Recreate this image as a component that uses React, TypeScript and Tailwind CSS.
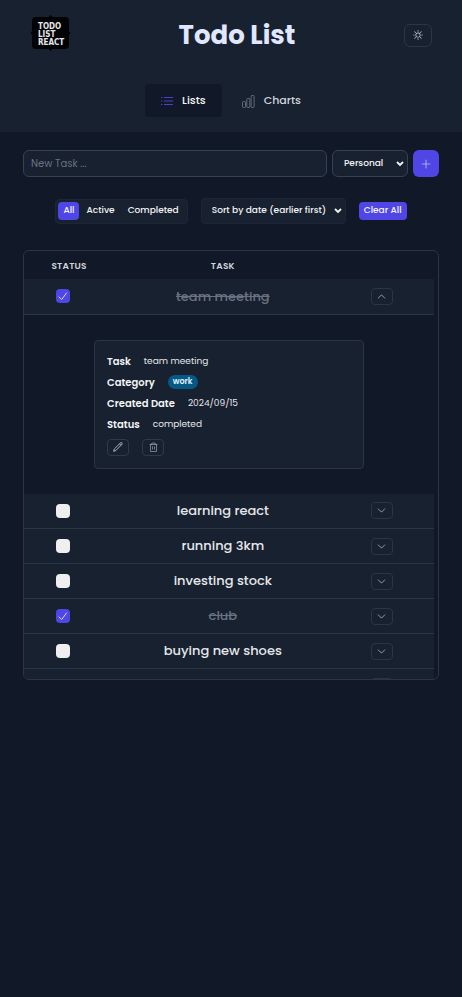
import { useState } from "react";
import { BsSun } from "react-icons/bs";
import { PiPlusLight, PiTrashLight } from "react-icons/pi";
import { ChevronDown, ChevronUp } from "lucide-react";

type Task = { name: string; done: boolean; category: string; date: string };

const initialTasks: Task[] = [
  { name: "team meeting", done: true, category: "work", date: "2024/09/15" },
  { name: "learning react", done: false, category: "study", date: "2024/09/15" },
  { name: "running 3km", done: false, category: "health", date: "2024/09/15" },
  { name: "investing stock", done: false, category: "finance", date: "2024/09/15" },
  { name: "club", done: true, category: "personal", date: "2024/09/15" },
  { name: "buying new shoes", done: false, category: "personal", date: "2024/09/15" },
  { name: "reading", done: false, category: "personal", date: "2024/09/15" },
];

function Logo() {
  return (
    <svg viewBox="0 0 40 38" className="h-[38px] w-10 overflow-visible" role="img" aria-label="Todo List React">
      <path
        d="M6 1h12.500l2-2 2 2H35q4 0 4 4v10l1.500 2-1.500 2v10q0 4-4 4H22.500l-2 2-2-2H6q-4 0-4-4V19L.5 17 2 15V5q0-4 4-4z"
        fill="#020304"
      />
      <g fill="#e5e7eb" fontFamily='"Liberation Sans Narrow", "DejaVu Sans Condensed", sans-serif' fontSize="8" fontWeight="700">
        <text x="8" y="13">TODO</text>
        <text x="8" y="21">LIST</text>
        <text x="8" y="29">REACT</text>
      </g>
    </svg>
  );
}

function ListIcon() {
  return (
    <svg viewBox="0 0 12 10" className="h-[10px] w-3 text-[#4f46e5]" fill="none" stroke="currentColor" strokeWidth="0.9" aria-hidden="true">
      <path d="M3 1.500h9M3 5h9M3 8.500h9M0 1.500h1.400M0 5h1.400M0 8.500h1.400" />
    </svg>
  );
}

function ChartIcon() {
  return (
    <svg viewBox="0 0 13 14" className="h-[14px] w-[13px] text-gray-500" fill="none" stroke="currentColor" strokeWidth="0.9" aria-hidden="true">
      <rect x="0.5" y="7.500" width="3" height="6" rx="0.8" />
      <rect x="4.800" y="4.500" width="3" height="9" rx="0.8" />
      <rect x="9.100" y="1.500" width="3" height="12" rx="0.8" />
    </svg>
  );
}

function PencilIcon() {
  return (
    <svg viewBox="0 0 10 10" className="h-[10px] w-[10px]" fill="none" stroke="currentColor" strokeWidth="0.8" strokeLinejoin="round" aria-hidden="true">
      <path d="M.7 9.300l.6-2.300L7.600.8q.8-.5 1.300 0t.1 1.400L2.900 8.500zM6.600 1.900l1.400 1.400" />
    </svg>
  );
}

function CheckIcon() {
  return (
    <svg viewBox="0 0 14 14" className="pointer-events-none absolute inset-0 h-[14px] w-[14px]" fill="none" stroke="#e0e7ff" strokeWidth="0.9" strokeLinecap="round" strokeLinejoin="round" aria-hidden="true">
      <path d="M3 8l2.700 2.500L10.500 4" />
    </svg>
  );
}

function SelectArrow() {
  return (
    <svg viewBox="0 0 8 6" className="pointer-events-none absolute right-1 top-1/2 h-[6px] w-2 -translate-y-1/2" fill="none" stroke="#f3f4f6" strokeWidth="1.800" aria-hidden="true">
      <path d="M1 1l3 3 3-3" />
    </svg>
  );
}

function Details({ task }: { task: Task }) {
  const iconButton =
    "flex h-[17px] w-[22px] items-center justify-center rounded border border-[#2f3947] text-gray-300";
  return (
    <div className="mx-auto w-[270px] rounded border border-[#2b3543] bg-[#18212f] px-3 pt-[10px] pb-3 text-left text-[9px] leading-[21px] text-gray-200">
      <dl>
        <div className="flex items-center gap-[13px]">
          <dt className="text-[10px] font-semibold text-gray-100">Task</dt>
          <dd>{task.name}</dd>
        </div>
        <div className="flex items-center gap-[13px]">
          <dt className="text-[10px] font-semibold text-gray-100">Category</dt>
          <dd className="rounded-full bg-[#075985] px-[5px] text-[8px] leading-[14px] font-semibold text-sky-100">
            {task.category}
          </dd>
        </div>
        <div className="flex items-center gap-[13px]">
          <dt className="text-[10px] font-semibold text-gray-100">Created Date</dt>
          <dd>{task.date}</dd>
        </div>
        <div className="flex items-center gap-[13px]">
          <dt className="text-[10px] font-semibold text-gray-100">Status</dt>
          <dd>{task.done ? "completed" : "active"}</dd>
        </div>
      </dl>
      <div className="mt-1 flex gap-[13px]">
        <button className={iconButton} aria-label="Edit task">
          <PencilIcon />
        </button>
        <button className={iconButton} aria-label="Delete task">
          <PiTrashLight size={11} />
        </button>
      </div>
    </div>
  );
}

export default function App() {
  const [tasks, setTasks] = useState(initialTasks);
  const [open, setOpen] = useState(0);
  const [filter, setFilter] = useState("All");

  const toggle = (index: number) =>
    setTasks(tasks.map((t, i) => (i === index ? { ...t, done: !t.done } : t)));

  return (
    <div className="min-h-screen bg-[#111827] font-[Poppins,Inter,sans-serif] text-gray-100">
      <header className="bg-[#18212f] px-[30px] pt-[15px] pb-[15px]">
        <div className="flex items-center justify-between">
          <Logo />
          <h1 className="text-[26px] leading-10 font-bold text-[#e0e7ff]">Todo List</h1>
          <button
            className="flex h-[23px] w-7 items-center justify-center rounded-md border border-[#2b3543] text-gray-200"
            aria-label="Switch theme"
          >
            <BsSun size={10} />
          </button>
        </div>
        <nav className="mt-[29px] flex justify-center gap-1 text-[11px] font-medium">
          <a href="#lists" className="flex h-[33px] items-center gap-[9px] rounded bg-[#111827] px-4">
            <ListIcon />
            Lists
          </a>
          <a href="#charts" className="flex h-[33px] items-center gap-[9px] rounded px-4 text-gray-300">
            <ChartIcon />
            Charts
          </a>
        </nav>
      </header>

      <main className="px-[23px] pt-[18px]">
        <form className="flex gap-[5px]" onSubmit={(e) => e.preventDefault()}>
          <input
            type="text"
            aria-label="New task"
            placeholder="New Task ..."
            className="h-[27px] min-w-0 flex-1 rounded-md border border-gray-700 bg-[#18212f] px-[7px] text-[10px] placeholder:text-gray-500"
          />
          <div className="relative">
            <select
              aria-label="Category"
              className="block h-[27px] w-[76px] appearance-none rounded-md border border-gray-700 bg-[#18212f] pl-[11px] text-[9px] font-medium"
            >
              <option>Personal</option>
              <option>Work</option>
            </select>
            <SelectArrow />
          </div>
          <button className="flex h-[27px] w-[26px] items-center justify-center rounded-md bg-[#4f46e5]" aria-label="Add task">
            <PiPlusLight size={12} />
          </button>
        </form>

        <div className="mt-[21px] flex items-center justify-center gap-[13px] text-[9px] font-medium">
          <div className="flex h-[25px] items-center gap-px rounded border border-[#1c2634] bg-[#18212f] px-[2px]">
            {["All", "Active", "Completed"].map((name) => (
              <button
                key={name}
                onClick={() => setFilter(name)}
                className={
                  filter === name
                    ? "h-[18px] rounded bg-[#4f46e5] px-[5px]"
                    : "h-[18px] rounded px-[6px]"
                }
              >
                {name}
              </button>
            ))}
          </div>
          <div className="relative">
            <select
              aria-label="Sort order"
              className="block h-[26px] w-[145px] appearance-none rounded border border-[#1c2634] bg-[#18212f] pl-[10px]"
            >
              <option>Sort by date (earlier first)</option>
              <option>Sort by date (later first)</option>
            </select>
            <SelectArrow />
          </div>
          <button className="h-[18px] rounded bg-[#4f46e5] px-[5px]">Clear All</button>
        </div>

        <div className="mt-[26px] h-[430px] overflow-hidden rounded-md border border-[#2b3543] pr-1">
          <table className="w-full table-fixed border-collapse text-center">
            <colgroup>
              <col className="w-[22%]" />
              <col className="w-[53%]" />
              <col className="w-[25%]" />
            </colgroup>
            <thead>
              <tr className="h-7 text-[9px] leading-3 tracking-wide text-gray-300">
                <th className="pt-[2px] font-semibold">STATUS</th>
                <th className="pt-[2px] font-semibold">TASK</th>
                <th aria-label="Details" />
              </tr>
            </thead>
            {tasks.map((task, i) => (
              <tbody key={task.name}>
                <tr className="h-[35px] border-b border-[#2b3543] bg-[#18212f]">
                  <td className="pr-3">
                    <label className="relative mx-auto block h-[14px] w-[14px]">
                      <input
                        type="checkbox"
                        checked={task.done}
                        onChange={() => toggle(i)}
                        aria-label={task.name}
                        className="block h-[14px] w-[14px] appearance-none rounded bg-[#efefef] checked:bg-[#4f46e5]"
                      />
                      {task.done && <CheckIcon />}
                    </label>
                  </td>
                  <td className={task.done ? "text-[13px] font-medium text-gray-500 line-through" : "text-[13px] font-medium text-gray-200"}>
                    {task.name}
                  </td>
                  <td className="pr-[2px]">
                    <button
                      onClick={() => setOpen(open === i ? -1 : i)}
                      aria-label={open === i ? "Hide details" : "Show details"}
                      className="mx-auto flex h-[17px] w-[22px] items-center justify-center rounded border border-[#2b3543] text-gray-300"
                    >
                      {open === i ? <ChevronUp size={13} strokeWidth={1.25} /> : <ChevronDown size={13} strokeWidth={1.25} />}
                    </button>
                  </td>
                </tr>
                {open === i && (
                  <tr>
                    <td colSpan={3} className="py-[25px]">
                      <Details task={task} />
                    </td>
                  </tr>
                )}
              </tbody>
            ))}
          </table>
        </div>
      </main>
    </div>
  );
}
